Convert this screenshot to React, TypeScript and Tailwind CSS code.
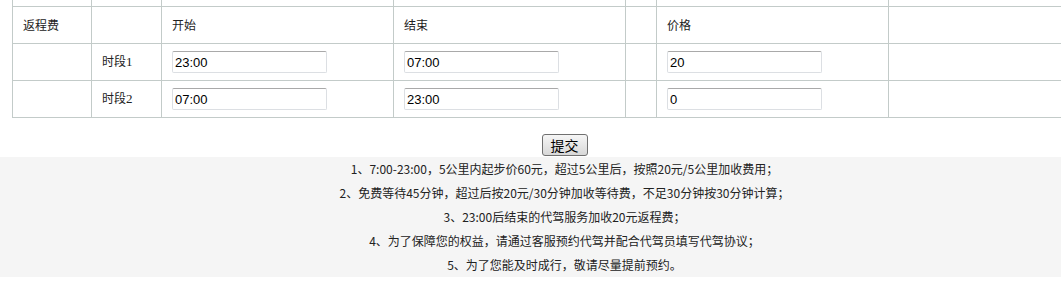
import React from 'react';

interface Period {
    label: string;
    start: string;
    end: string;
    price: string;
}

const periods: Period[] = [
    { label: '时段1', start: '23:00', end: '07:00', price: '20' },
    { label: '时段2', start: '07:00', end: '23:00', price: '0' },
];

const notes = [
    '1、7:00-23:00，5公里内起步价60元，超过5公里后，按照20元/5公里加收费用；',
    '2、免费等待45分钟，超过后按20元/30分钟加收等待费，不足30分钟按30分钟计算；',
    '3、23:00后结束的代驾服务加收20元返程费；',
    '4、为了保障您的权益，请通过客服预约代驾并配合代驾员填写代驾协议；',
    '5、为了您能及时成行，敬请尽量提前预约。',
];

const cell = 'border border-[#c3cbc9] pl-[10px] align-middle';
const inputCls =
    'w-[155px] h-[22px] px-[2px] border border-[#dcdfe3] border-t-[#a9a9a9] rounded-[2px] text-[13px] text-black bg-white outline-none font-["Liberation_Sans",Arial,sans-serif]';

export default function App(): React.JSX.Element {
    return (
        <div className="w-[1061px] h-[293px] overflow-hidden bg-white text-[12px] text-[#222] font-['Noto_Sans_CJK_SC',sans-serif]">
            <div className="ml-[12px] -mt-[20px]">
                <table className="w-[1080px] table-fixed border-collapse">
                    <colgroup>
                        <col className="w-[79px]" />
                        <col className="w-[70px]" />
                        <col className="w-[232px]" />
                        <col className="w-[232px]" />
                        <col className="w-[31px]" />
                        <col className="w-[232px]" />
                        <col />
                    </colgroup>
                    <tbody>
                        {/* row above, mostly scrolled out of view */}
                        <tr className="h-[26px]">
                            <td className={cell}></td>
                            <td className={cell}></td>
                            <td className={cell}></td>
                            <td className={cell}></td>
                            <td className={cell}></td>
                            <td className={cell}></td>
                            <td className={cell}></td>
                        </tr>
                        <tr className="h-[37px]">
                            <td className={cell}>返程费</td>
                            <td className={cell}></td>
                            <td className={cell}>开始</td>
                            <td className={cell}>结束</td>
                            <td className={cell}></td>
                            <td className={cell}>价格</td>
                            <td className={cell}></td>
                        </tr>
                        {periods.map((p) => (
                            <tr key={p.label} className="h-[37px]">
                                <td className={cell}></td>
                                <td className={cell}>
                                    {p.label.slice(0, 2)}
                                    <span className="font-['Liberation_Serif',serif] text-[13px]">{p.label.slice(2)}</span>
                                </td>
                                <td className={cell}>
                                    <input className={inputCls} defaultValue={p.start} />
                                </td>
                                <td className={cell}>
                                    <input className={inputCls} defaultValue={p.end} />
                                </td>
                                <td className={cell}></td>
                                <td className={cell}>
                                    <input className={inputCls} defaultValue={p.price} />
                                </td>
                                <td className={cell}></td>
                            </tr>
                        ))}
                    </tbody>
                </table>
            </div>

            <div className="flex justify-center pl-[68px] mt-[16px] h-[23px]">
                <button
                    type="button"
                    className="w-[46px] h-[22px] border border-[#707070] rounded-[3px] bg-gradient-to-b from-[#f6f6f6] to-[#d8d8d8] text-[14px] leading-none text-black"
                >
                    提交
                </button>
            </div>

            <div className="bg-[#f5f5f5] pl-[68px] py-0">
                {notes.map((n) => (
                    <p key={n} className="h-[24px] leading-[24px] text-center text-[12px] text-[#222]">
                        {n}
                    </p>
                ))}
            </div>
        </div>
    );
}
